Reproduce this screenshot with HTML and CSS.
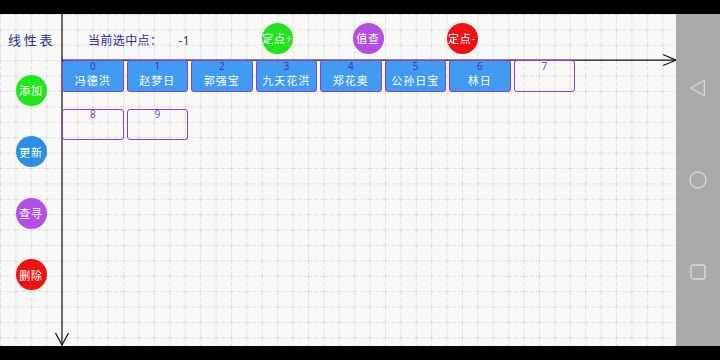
FILE: index.html
```html
<!DOCTYPE html>
<html lang="zh-CN">
<head>
<meta charset="utf-8">
<title>线性表</title>
<link rel="stylesheet" href="styles.css">
</head>
<body>
<div class="screen">
  <div class="statusbar"></div>
  <div class="main">
    <div class="canvas">
      <svg class="grid" width="676" height="332" viewBox="0 0 676 332" aria-hidden="true">
        <defs>
          <pattern id="cell" x="0" y="0" width="15.4" height="15.4" patternUnits="userSpaceOnUse">
            <line x1="0" y1="0" x2="15.4" y2="0" stroke="#c8c8c8" stroke-width="1" stroke-dasharray="4 2"/>
            <line x1="0" y1="0" x2="0" y2="15.4" stroke="#c8c8c8" stroke-width="1" stroke-dasharray="4 2"/>
          </pattern>
        </defs>
        <rect x="0" y="0" width="676" height="332" fill="url(#cell)"/>
        <g stroke="#111" stroke-width="1.2" fill="none">
          <line x1="62" y1="46.2" x2="676" y2="46.2"/>
          <polyline points="663,40.5 676,46.2 663,51.5"/>
          <line x1="62" y1="0" x2="62" y2="331"/>
          <polyline points="55.5,319 62,331 68.5,319"/>
        </g>
      </svg>

      <div class="header">
        <div class="title">线性表</div>
        <div class="current">当前选中点：<span class="cur-val">-1</span></div>
        <div class="btn green top1">定点+</div>
        <div class="btn purple top2">值查</div>
        <div class="btn red top3">定点-</div>
      </div>

      <div class="side">
        <div class="btn green">添加</div>
        <div class="btn blue">更新</div>
        <div class="btn purple">查寻</div>
        <div class="btn red">删除</div>
      </div>

      <div class="list">
        <div class="node filled"><span class="idx">0</span><span class="name">冯德洪</span></div>
        <div class="node filled"><span class="idx">1</span><span class="name">赵梦日</span></div>
        <div class="node filled"><span class="idx">2</span><span class="name">郭强宝</span></div>
        <div class="node filled"><span class="idx">3</span><span class="name">九天花洪</span></div>
        <div class="node filled"><span class="idx">4</span><span class="name">郑花奥</span></div>
        <div class="node filled"><span class="idx">5</span><span class="name">公孙日宝</span></div>
        <div class="node filled"><span class="idx">6</span><span class="name">林日</span></div>
        <div class="node empty"><span class="idx">7</span><span class="name"></span></div>
        <div class="node empty"><span class="idx">8</span><span class="name"></span></div>
        <div class="node empty"><span class="idx">9</span><span class="name"></span></div>
      </div>
    </div>

    <div class="navbar">
      <svg class="nav-icon" width="18" height="18" viewBox="0 0 18 18" aria-hidden="true">
        <polygon points="15.3,1.3 1.8,9 15.3,16.7" fill="none" stroke="#dadada" stroke-width="1.3" stroke-linejoin="round"/>
      </svg>
      <svg class="nav-icon" width="18" height="18" viewBox="0 0 18 18" aria-hidden="true">
        <circle cx="9" cy="9" r="8" fill="none" stroke="#dadada" stroke-width="1.3"/>
      </svg>
      <svg class="nav-icon" width="18" height="18" viewBox="0 0 18 18" aria-hidden="true">
        <rect x="2" y="2" width="14" height="14" rx="2" fill="none" stroke="#dadada" stroke-width="1.3"/>
      </svg>
    </div>
  </div>
  <div class="bottombar"></div>
</div>
</body>
</html>
```

FILE: styles.css
```css
html, body {
  margin: 0;
  padding: 0;
  background: #000;
}

.screen {
  width: 720px;
  height: 360px;
  display: flex;
  flex-direction: column;
  font-family: "Noto Sans CJK SC", "Noto Sans", sans-serif;
}

.statusbar,
.bottombar {
  height: 14px;
  background: #000;
  flex: none;
}

.main {
  height: 332px;
  display: flex;
}

.canvas {
  position: relative;
  width: 676px;
  height: 332px;
  background: #f8f8f6;
  display: grid;
  grid-template-columns: 62px 1fr;
  grid-template-rows: 46px 1fr;
  overflow: hidden;
}

.grid {
  position: absolute;
  left: 0;
  top: 0;
}

.header,
.side,
.list {
  position: relative;
}

.header {
  grid-column: 1 / -1;
  grid-row: 1;
  display: flex;
  align-items: flex-start;
}

.title {
  margin-left: 8px;
  margin-top: 17px;
  width: 80px;
  font-size: 13px;
  line-height: 18px;
  letter-spacing: 2.7px;
  color: #2b2ba3;
}

.current {
  width: 174px;
  margin-top: 17px;
  font-size: 12px;
  line-height: 18px;
  letter-spacing: 0.4px;
  color: #2b2ba3;
  white-space: nowrap;
}

.cur-val {
  margin-left: 16px;
  font-family: "Noto Sans", sans-serif;
  font-size: 12px;
  letter-spacing: 0.5px;
}

.btn {
  width: 31px;
  height: 31px;
  border-radius: 50%;
  display: flex;
  align-items: center;
  justify-content: center;
  color: #fff;
  font-size: 11px;
  letter-spacing: 0.8px;
  white-space: nowrap;
  flex: none;
}

.header .btn {
  margin-top: 8.5px;
}

.top2 {
  margin-left: 59.5px;
}

.top3 {
  margin-left: 63px;
}

.green { background: #22e41f; }
.blue { background: #2b8fe6; }
.purple { background: #b24fe4; }
.red { background: #ee1212; }

.side {
  grid-column: 1;
  grid-row: 2;
  display: flex;
  flex-direction: column;
  align-items: flex-start;
  padding-left: 15.5px;
  padding-top: 14.5px;
  gap: 30.5px;
}

.list {
  grid-column: 2;
  grid-row: 2;
  width: 514px;
  display: flex;
  flex-wrap: wrap;
  align-content: flex-start;
  column-gap: 3px;
  row-gap: 17px;
}

.node {
  width: 61.5px;
  height: 31.5px;
  box-sizing: border-box;
  border: 1.7px solid #8a3ed4;
  border-radius: 3px;
  display: flex;
  flex-direction: column;
  align-items: center;
}

.node.filled {
  background: #419bf0;
}

.idx {
  font-family: "Noto Sans", sans-serif;
  font-size: 10px;
  line-height: 9px;
  margin-top: 0.5px;
}

.filled .idx { color: #3a38b8; }
.empty .idx { color: #8a44cc; }

.name {
  margin-top: 1px;
  font-size: 11px;
  line-height: 16px;
  letter-spacing: 1px;
  color: #fff;
  white-space: nowrap;
}

.navbar {
  width: 44px;
  height: 332px;
  background: #a9aba8;
  display: flex;
  flex-direction: column;
  align-items: center;
  padding-top: 65px;
  box-sizing: border-box;
  gap: 74px;
}

.nav-icon {
  display: block;
}
```
